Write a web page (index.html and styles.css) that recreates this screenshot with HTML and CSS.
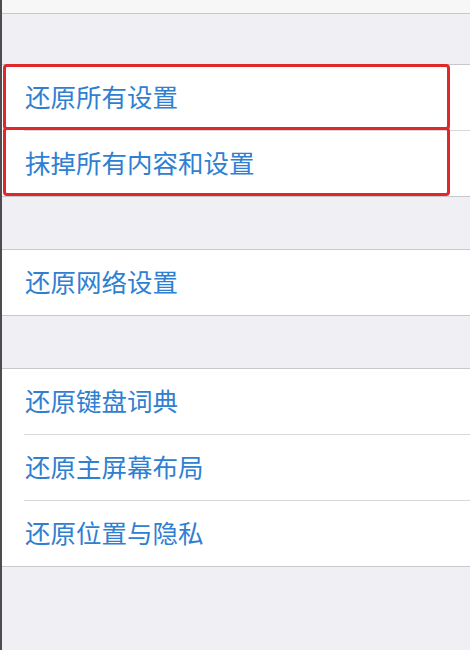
FILE: index.html
```html
<!DOCTYPE html>
<html lang="zh-CN">
<head>
    <meta charset="UTF-8">
    <meta name="viewport" content="width=device-width, initial-scale=1.0">
    <title>还原</title>
    <link rel="stylesheet" href="styles.css">
</head>
<body>
    <div class="screen">
        <div class="top-band"></div>

        <div class="group">
            <div class="row">
                <span class="label">还原所有设置</span>
                <span class="mark mark-first"></span>
            </div>
            <div class="row">
                <span class="label">抹掉所有内容和设置</span>
                <span class="mark mark-second"></span>
            </div>
        </div>

        <div class="group">
            <div class="row">
                <span class="label">还原网络设置</span>
            </div>
        </div>

        <div class="group">
            <div class="row">
                <span class="label">还原键盘词典</span>
            </div>
            <div class="row">
                <span class="label">还原主屏幕布局</span>
            </div>
            <div class="row">
                <span class="label">还原位置与隐私</span>
            </div>
        </div>
    </div>
</body>
</html>
```

FILE: styles.css
```css
html, body {
    margin: 0;
    padding: 0;
}
body {
    font-family: "Noto Sans CJK SC", "Noto Sans", sans-serif;
    background-color: #efeff4;
}
.screen {
    box-sizing: border-box;
    height: 650px;
    overflow: hidden;
    border-left: 2px solid #4d4d4d;
    background-color: #efeff4;
}
.top-band {
    height: 13px;
    background-color: #f7f7f8;
    border-bottom: 1px solid #c8c7cc;
}
.group {
    margin-top: 50px;
    background: white;
    border-top: 1px solid #c8c7cc;
    border-bottom: 1px solid #c8c7cc;
}
.group + .group {
    margin-top: 52px;
}
.row {
    position: relative;
    height: 60px;
    padding-bottom: 5px;
    display: flex;
    align-items: center;
    padding-left: 23px;
}
/* inset separator between rows */
.row + .row {
    margin-top: 1px;
}
.row + .row::before {
    content: "";
    position: absolute;
    top: -1px;
    left: 22px;
    right: 0;
    height: 1px;
    background-color: #d8d8dc;
}
.label {
    font-size: 25.5px;
    color: #2f80d1;
}
/* red highlight boxes drawn over the first two rows */
.mark {
    position: absolute;
    left: 1px;
    width: 441px;
    border: 3px solid #e0282b;
    border-radius: 4px;
    pointer-events: none;
    z-index: 1;
}
.mark-first {
    top: -1px;
    bottom: 0;
}
.mark-second {
    top: -4px;
    bottom: 0;
}
```
